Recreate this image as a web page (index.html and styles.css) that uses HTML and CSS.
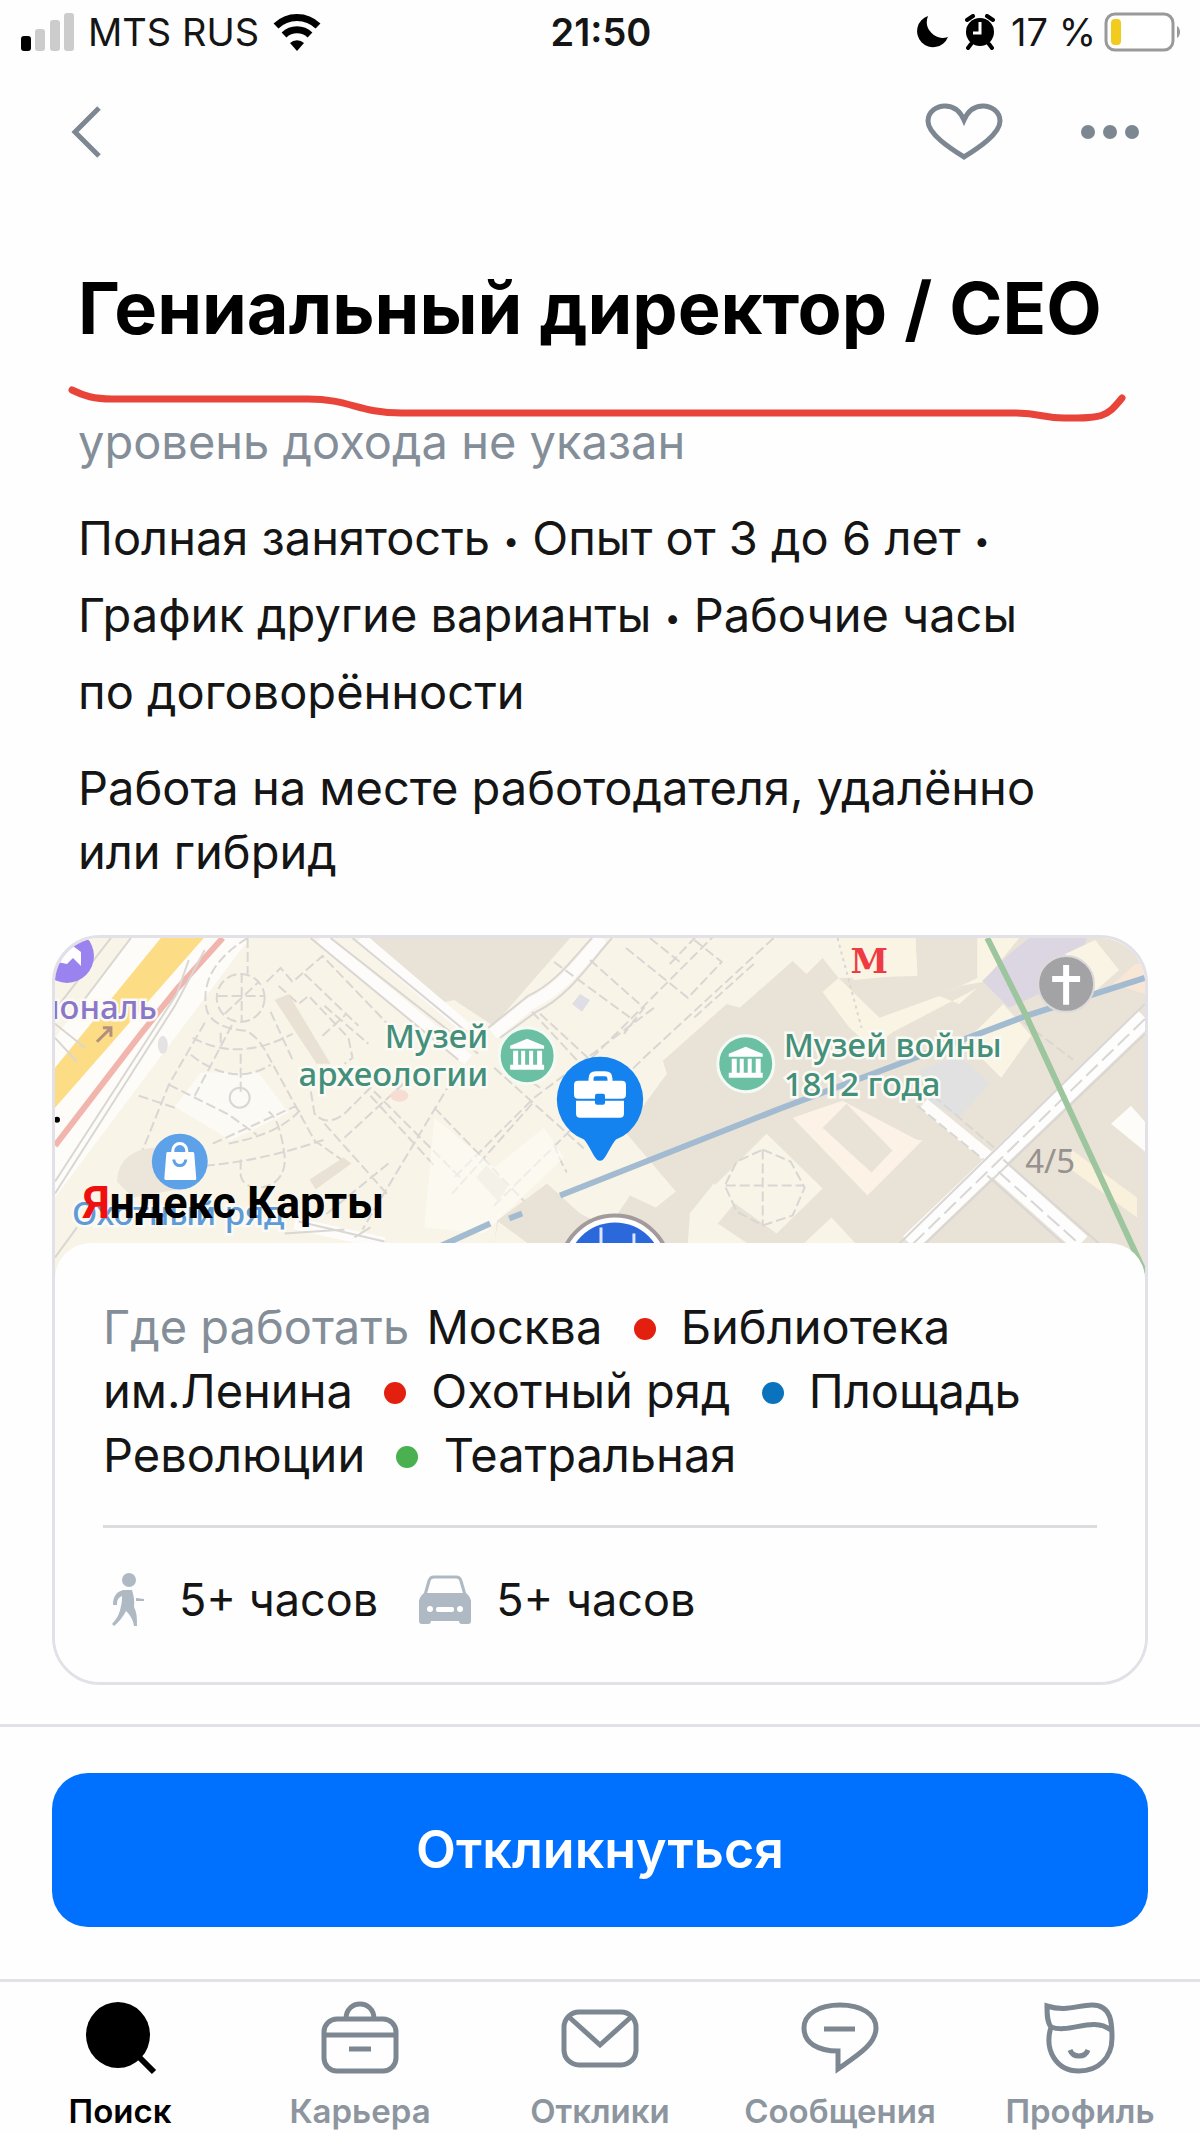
FILE: index.html
```html
<!DOCTYPE html>
<html lang="ru">
<head>
  <meta charset="UTF-8" />
  <meta name="viewport" content="width=device-width, initial-scale=1" />
  <title>Гениальный директор / CEO</title>
  <link rel="stylesheet" href="styles.css">
</head>
<body>
  <div class="status-bar">
    <div class="status-left">
      <svg class="signal" viewBox="0 0 54 40" width="54" height="40">
        <rect x="1" y="24" width="10" height="15" rx="3" fill="#000"/>
        <rect x="15" y="17" width="10" height="22" rx="3" fill="#ccc"/>
        <rect x="30" y="8" width="10" height="31" rx="3" fill="#ccc"/>
        <rect x="44" y="1" width="10" height="38" rx="3" fill="#ccc"/>
      </svg>
      <span>MTS RUS</span>
      <svg viewBox="0 0 48 40" width="48" height="40">
        <path d="M3 14a30 30 0 0 1 42 0" fill="none" stroke="#000" stroke-width="7"/>
        <path d="M11 23a19 19 0 0 1 26 0" fill="none" stroke="#000" stroke-width="7"/>
        <path d="M17 31a10 10 0 0 1 14 0l-7 8z"/>
      </svg>
    </div>
    <div class="clock">21:50</div>
    <div class="status-right">
      <svg class="moon" viewBox="0 0 32 34" width="32" height="34">
        <path d="M11 1A16 16 0 1 0 31 22 16 16 0 0 1 11 1z"/>
      </svg>
      <svg class="alarm" viewBox="0 0 30 36" width="30" height="36">
        <circle cx="15" cy="18" r="14"/>
        <path d="M2 6l6-4M22 2l6 4M6 30l-3 4M24 30l3 4" stroke="#000" stroke-width="4" stroke-linecap="round"/>
        <path d="M15 8v11H8" fill="none" stroke="#fff" stroke-width="3"/>
      </svg>
      <span>17 %</span>
      <svg class="battery" viewBox="0 0 78 40" width="78" height="40">
        <rect x="2" y="2" width="67" height="36" rx="9" fill="#fff" stroke="#999" stroke-width="3"/>
        <rect x="7" y="7" width="10" height="26" rx="4" fill="#f3cb1c"/>
        <path d="M73 14c4 2 4 10 0 12z" fill="#999"/>
      </svg>
    </div>
  </div>

  <header class="top-nav">
    <button class="icon-btn" aria-label="Назад">
      <svg viewBox="0 0 34 52" width="34" height="52">
        <path d="M31 2L7 26l24 24" class="line"/>
      </svg>
    </button>
    <div class="top-actions">
      <button class="icon-btn" aria-label="В избранное">
        <svg viewBox="0 0 80 60" width="80" height="60">
          <path d="M40 55C26 46 4 32 4 19 4 10 12 4 21 4c9 0 15 5 19 14C44 9 50 4 59 4c9 0 17 6 17 15 0 13-22 27-36 36z" class="line"/>
        </svg>
      </button>
      <button class="icon-btn" aria-label="Ещё">
        <svg viewBox="0 0 60 16" width="60" height="16" fill="#7d8791">
          <ellipse cx="8" cy="8" rx="7" ry="7"/>
          <ellipse cx="30" cy="8" rx="7" ry="7"/>
          <ellipse cx="52" cy="8" rx="7" ry="7"/>
        </svg>
      </button>
    </div>
  </header>

  <main class="vacancy">
    <div class="intro">
      <h1>Гениальный директор / CEO</h1>
      <svg class="marker" viewBox="0 0 1064 36">
        <path d="M4 6C16 12 26 15 44 15H240C282 15 290 29 334 29H944C972 29 975 34 996 34 1034 34 1038 34 1054 14" fill="none" stroke="#e8443a" stroke-width="7" stroke-linecap="round" stroke-linejoin="round"/>
      </svg>
      <p class="salary">уровень дохода не указан</p>
      <p class="terms">Полная занятость <span class="sep">•</span> Опыт от 3 до 6 лет <span class="sep">•</span><br>График другие варианты <span class="sep">•</span> Рабочие часы<br>по договорённости</p>
      <p class="place">Работа на месте работодателя, удалённо<br>или гибрид</p>
    </div>

    <section class="card">
      <svg class="map" viewBox="0 0 1092 342">
        <rect width="1092" height="342" fill="#f9f4e8"/>

        <!-- дороги слева -->
        <path d="M0 100L75 0H195L0 260z" fill="#fdfcf8"/>
        <path d="M106 0H149L0 170V130z" fill="#fcdc85"/>
        <path d="M168 0L123 50 86 96 0 208" class="road-red"/>
        <path d="M56 0L0 72M76 0L14 82M0 100l22 24M0 86l30 24M134 22l-12 34L0 244M150 12L120 68 0 256M0 320L22 290" class="thin"/>

        <!-- сквер -->
        <path d="M146 135l58 0 30 40-58 28-56-34z" fill="#fbfaf5"/>
        <circle cx="186" cy="60" r="24" class="dash"/>
        <path d="M163 58h46M187 35v50M193 0v36M170 76l34-32" class="dash"/>
        <path d="M193 0C160 20 146 45 152 72c4 14 22 20 40 21 10 6 16 14 22 26l34 62 12 22 34 24M150 85l-36 62-34 85M136 117c30 24 58 24 80 10M138 100c30 16 62 16 100-4M186 116v40M166 95v14M114 147l60 30 28 20M140 158l40-76M158 206l84-38M174 206c40-8 60-20 74-36M120 170l-36-12M150 228c50-4 90-16 120-26M186 222v14c0 22 48 20 44-18-4-30-10-40-16-44" class="dash"/>
        <circle cx="185" cy="160" r="10" class="thin"/>
        <path d="M224 48l20 18 10-8 40 42 4 20-8 6M212 44l14-14 12 14 30-26 90 94M270 68l44 38M268 98l24-22M250 36l54 52M254 140l6 36c10 12 24 6 32-2l24-24 90 90M270 186l64 72M290 200l70-64M316 158l64 70M404 132l-96 160M334 226l-64 52M216 74l22 48" class="dash"/>
        <path d="M220 62l14-6 42 70h-14z" fill="#e9e2d4"/>
        <path d="M255 242l34-22 8 6-36 26z" fill="#e9e2d4"/>
        <path d="M62 244q2-34 44-34l28 40-56 10z" fill="#ece5d9"/>
        <ellipse cx="108" cy="107" rx="5" ry="9" fill="#e4e2e2"/>
        <ellipse cx="345" cy="158" rx="9" ry="6" fill="#f6dcd2"/>

        <!-- кварталы в центре -->
        <path d="M306 0H516L439 88 400 62 380 66z" fill="#e9e2d6"/>
        <path d="M266 0L414 122M306 0L428 104M439 96L476 66C510 50 530 20 548 0" class="road-w"/>
        <path d="M256 0L404 122M276 0L424 116M298 0L422 102M434 90L474 58C504 44 522 16 538 0M446 100L482 74C516 58 538 22 558 0" class="thin"/>
        <path d="M536 22l54 48-20 26M500 24l82 60M572 10l62 50 34-36-30-24M596 0l30 24M616 26l42-44M486 76l50 46 150-150M478 74l76 82M600 70L480 160 400 240M720 0L590 120 440 268M700 26L640 80M486 150l-24-16M540 180l80 80M500 206c10 30 24 50 52 72M478 166l-80 90M380 170l100 104M440 130l100 90" class="dash"/>
        <path d="M518 66l8-10 10 6-8 12z" fill="#dfdde6"/>
        <path d="M422 240l10-12 22 20-10 16z" fill="#e9e2d6"/>
        <path d="M380 180l60 50 50-40 20 30-80 76-60-6z" fill="#fcfbf5" opacity=".6"/>
        <path d="M240 286L330 306" class="road-w"/>
        <path d="M244 284L330 304M230 296l60-4M300 300l16-10" class="thin"/>

        <!-- застройка справа -->
        <path d="M739 23L753 36 769 20 785 40 864 38 862 0H1092V342H436L443 283 493 246 526 276 550 288 569 252 609 256 576 216 569 196 613 136 609 123 673 66 686 70z" fill="#e9e2d6"/>
        <path d="M540 196l26-8 56 66-20 16-26-12-24 36-50-44zM440 306l4-22 30 22z" fill="#f9f4e8"/>
        <path d="M769 54L785 40 826 80 886 58 906 66 924 50 840 94 818 110 796 90z" fill="#faf4e4"/>
        <path d="M785 0H862L864 36 800 42z" fill="#faf4e4"/>
        <path d="M924 0H966L930 44 906 48 890 56 924 40z" fill="#faf4e4"/>
        <path d="M739 180L789 163 863 202 869 203 814 258z" fill="#fcf3e6"/>
        <path d="M793 166L839 213 818 235 769 190z" fill="#e9e2d6"/>
        <path d="M713 196L769 251 723 296 659 250z" fill="#f9f4e8"/>
        <path d="M636 276l24-30 24 16-20 24 30 20h-60zM750 306l28-26 24 26z" fill="#f9f4e8"/>
        <path d="M709 212l28 12 14 26-12 28-30 10-26-14-12-26 12-24zM709 212v76M672 248h78" class="dash"/>
        <path d="M866 132l40-14 30 28-30 34-30-16z" fill="#e2e1e2"/>
        <path d="M912 104l38-38 28 32-30 42z" fill="#faf4e4"/>
        <path d="M929 43L956 16 976 0H1034L1020 40 956 70z" fill="#dcd6e2"/>
        <path d="M1012 16l30-14 24 30-34 30z" fill="#faf4e4"/>
        <path d="M1060 46l22-20h10v30z" fill="#f8e6d6"/>
        <path d="M1058 186l20-18 14 16v30z" fill="#fdfcf8"/>
        <path d="M1018 212l66 48v20l-66-48z" fill="#faf1dd"/>
        <path d="M784 0L808 90" class="dots"/>
        <path d="M870 166l76 62" class="road-w"/>
        <path d="M970 84l50 38M864 168l76 62M880 158l68 58" class="dash"/>
        <path d="M1092 80L856 306M943 230L1028 306" class="road-big"/>
        <path d="M1092 66L846 306M1092 96L872 306M950 222L1046 306M934 238L1010 306" class="thin"/>
        <path d="M1092 81L860 306M945 234L1030 310" class="lane"/>

        <!-- метро -->
        <path d="M383 310L436 286M455 281L468 276M506 258L726 171 846 126 973 78 1092 40" class="metro-blue"/>
        <path d="M934 0L973 78 1092 336" class="metro-green"/>

        <!-- подписи -->
        <circle cx="12" cy="18" r="27" fill="#9a83ee"/>
        <path d="M2 24l16-16 8 6 0 14-8-8-6 6z" fill="#fff"/>
        <text x="102" y="81" text-anchor="end" class="label purple">иональ</text>
        <path d="M42 104l14-14m-8 0h8v9" fill="none" stroke="#b58f7e" stroke-width="3"/>
        <circle cx="2" cy="182" r="3"/>
        <text x="434" y="110" text-anchor="end" class="label green">Музей</text>
        <text x="434" y="148" text-anchor="end" class="label green">археологии</text>
        <text x="730" y="119" class="label green">Музей войны</text>
        <text x="730" y="158" class="label green">1812 года</text>
        <text x="972" y="235" class="label grey">4/5</text>
        <text x="797" y="35" class="metro">М</text>
        <text x="17" y="288" class="label blue">Охотный ряд</text>

        <g id="museum">
          <circle cx="473" cy="118" r="28" fill="#6bbfa3" stroke="#f4faf4" stroke-width="3"/>
          <path d="M456 108l17-7 17 7v3h-34zM459 113h5v14h-5zM467 113h4v14h-4zM475 113h4v14h-4zM483 113h5v14h-5zM456 127h34v5h-34z" fill="#fff"/>
        </g>
        <use href="#museum" x="219" y="8"/>

        <circle cx="1013" cy="46" r="28" fill="#a3a2a5" stroke="#dcdad8" stroke-width="2"/>
        <path d="M1013 27v40M999 41h28" stroke="#fff" stroke-width="6"/>

        <circle cx="125" cy="224" r="28" fill="#5da1e8"/>
        <path d="M113 216h25l2 25h-29z" fill="#fff" stroke="#fff" stroke-width="3" stroke-linejoin="round"/>
        <path d="M118 216v-3a7 7 0 0 1 14 0v3" fill="none" stroke="#fff" stroke-width="3"/>
        <path d="M119 222a6 6 0 0 0 12 0" fill="none" stroke="#5da1e8" stroke-width="3"/>
        <text x="28" y="281" class="brand"><tspan fill="#f00f0f">Я</tspan>ндекс Карты</text>

        <circle cx="561" cy="333" r="55" fill="#fff" stroke="#a39a9c" stroke-width="4"/>
        <circle cx="561" cy="333" r="48" fill="#2b68dc"/>
        <path d="M547 290v20M580 296v14" stroke="#dbe8ff" stroke-width="3"/>

        <path d="M546 119a43 43 0 0 1 16 83c-5 6-8 14-12 19-2 3-6 3-8 0-4-5-7-13-12-19a43 43 0 0 1 16-83z" fill="#1483ef"/>
        <path d="M537 144v-3q0-5 5-5h9q5 0 5 5v3" fill="none" stroke="#fff" stroke-width="5"/>
        <path d="M524 143h44q4 0 4 4v10q0 4-4 4H524q-4 0-4-4v-10q0-4 4-4zM522 163h48v13q0 4-4 4H526q-4 0-4-4z" fill="#fff"/>
        <rect x="541" y="156" width="10" height="11" rx="2" fill="#1483ef"/>
      </svg>

      <div class="card-body">
        <p class="stations"><span class="muted">Где работать</span> Москва <i class="dot red"></i> Библиотека<br>им.Ленина <i class="dot red"></i> Охотный ряд <i class="dot blue"></i> Площадь<br>Революции <i class="dot green"></i> Театральная</p>
        <div class="travel">
          <svg class="walk" viewBox="0 0 34 54" width="34" height="54" fill="#aeb9c4">
            <circle cx="18" cy="7" r="7"/>
            <path d="M12 17h9q3 9 2 17c3 6 3 11 3 19h-3c-1-7-4-11-8-15C12 44 7 50 3 53l-2-2c5-5 8-11 9-18 1-4 1-7 1-10-4 2-5 4-5 9H2c0-8 3-13 10-15z"/>
            <path d="M25 25l8 1v2h-8z"/>
          </svg>
          <span>5+ часов</span>
          <svg class="car" viewBox="0 0 54 50" width="54" height="50">
            <path d="M7 20l4-14q1-4 5-4h22q4 0 5 4l4 14" fill="none" stroke="#aeb9c4" stroke-width="3"/>
            <path d="M6 18h42q5 4 5 9v19q0 3-3 3h-6q-3 0-3-3H13q0 3-3 3H4q-3 0-3-3V27q0-5 5-9z" fill="#aeb9c4"/>
            <circle cx="12" cy="34" r="3" fill="#fff"/>
            <circle cx="42" cy="34" r="3" fill="#fff"/>
            <rect x="18" y="32" width="18" height="5" rx="2" fill="#fff"/>
          </svg>
          <span>5+ часов</span>
        </div>
      </div>
    </section>
  </main>

  <div class="action-bar">
    <button class="apply-btn">Откликнуться</button>
  </div>

  <nav class="tab-bar">
    <a href="#" class="tab active">
      <svg viewBox="0 0 80 84" width="80" height="84">
        <ellipse cx="38" cy="39" rx="32" ry="33"/>
        <path d="M58 60l16 16" stroke="#000" stroke-width="6"/>
      </svg>
      <span>Поиск</span>
    </a>
    <a href="#" class="tab">
      <svg viewBox="0 0 80 84" width="80" height="84">
        <rect x="4" y="23" width="72" height="52" rx="13" class="line"/>
        <path d="M26 23c0-20 28-20 28 0M4 39h72M29 53h22" class="line"/>
      </svg>
      <span>Карьера</span>
    </a>
    <a href="#" class="tab">
      <svg viewBox="0 0 80 84" width="80" height="84">
        <rect x="4" y="16" width="72" height="53" rx="15" class="line"/>
        <path d="M9 21l31 28 31-28" class="line"/>
      </svg>
      <span>Отклики</span>
    </a>
    <a href="#" class="tab">
      <svg viewBox="0 0 80 84" width="80" height="84">
        <path d="M38 73V55C18 55 4 47 4 32 4 18 19 9 40 9s36 9 36 23c0 16-18 27-38 41z" class="line"/>
        <path d="M24 33h31" class="line"/>
      </svg>
      <span>Сообщения</span>
    </a>
    <a href="#" class="tab">
      <svg viewBox="0 0 80 84" width="80" height="84">
        <path d="M7 10C26 16 38 9 52 9 72 9 72 28 72 42 72 62 58 75 39 75 16 75 4 54 11 31 7 26 7 18 7 10z" class="line"/>
        <path d="M11 31C30 38 52 20 71 34" class="line"/>
        <path d="M30 54c3 8 15 8 18 0" class="line"/>
      </svg>
      <span>Профиль</span>
    </a>
  </nav>
</body>
</html>
```
FILE: styles.css
```css
* {
  box-sizing: border-box;
}

body {
  margin: 0;
  min-height: 100vh;
  display: flex;
  flex-direction: column;
  background: #fefefe;
  color: #151515;
  font-family: Inter, "Liberation Sans", sans-serif;
  font-size: 47px;
  line-height: 64px;
}

h1, p {
  margin: 0;
}

.line {
  fill: none;
  stroke: #7d8791;
  stroke-width: 5;
}

.status-bar {
  display: grid;
  grid-template-columns: 1fr auto 1fr;
  align-items: center;
  height: 62px;
  padding: 0 18px 0 20px;
  font-size: 38px;
}

.status-left,
.status-right {
  display: flex;
  align-items: center;
  gap: 14px;
}

.status-right {
  justify-content: flex-end;
  gap: 16px;
}

.battery {
  margin-left: -8px;
}

.clock {
  font-weight: 600;
}

.top-nav {
  display: flex;
  justify-content: space-between;
  align-items: center;
  height: 140px;
  padding: 0 60px 0 68px;
}

.top-actions {
  display: flex;
  gap: 76px;
}

.icon-btn {
  display: flex;
  align-items: center;
  padding: 0;
  border: none;
  background: none;
  cursor: pointer;
}

.vacancy {
  flex: 1;
  padding: 64px 52px 36px;
}

.intro {
  padding: 0 16px 51px;
}

h1 {
  padding: 0 10px;
  color: #000;
  font-size: 72px;
  line-height: 84px;
  font-weight: 700;
}

.intro p {
  padding: 0 10px;
}

.marker {
  display: block;
  width: 100%;
  margin: 34px 0 -10px;
  overflow: visible;
}

.salary,
.muted {
  color: #848e98;
}

.terms {
  margin: 25px 0 26px;
  line-height: 77px;
}

.sep {
  font-size: 28px;
  line-height: 28px;
  vertical-align: 4px;
}

.card {
  overflow: hidden;
  border: 3px solid #e2e1e8;
  border-radius: 48px;
}

.map {
  display: block;
  width: 100%;
}

.thin,
.dash,
.dots,
.lane {
  fill: none;
  stroke: #d9d6d3;
  stroke-width: 2;
}

.dash {
  stroke-dasharray: 10 4;
}

.dots {
  stroke-dasharray: 3 4;
}

.lane {
  stroke-dasharray: 16 6;
}

.road-w {
  fill: none;
  stroke: #fdfcfa;
  stroke-width: 12;
}

.road-big {
  fill: none;
  stroke: #fdfdfd;
  stroke-width: 19;
}

.road-red {
  fill: none;
  stroke: #f2b5ae;
  stroke-width: 6;
}

.metro-blue {
  fill: none;
  stroke: #a2bbd0;
  stroke-width: 6;
}

.metro-green {
  fill: none;
  stroke: #9dc59e;
  stroke-width: 6;
}

.label {
  font-family: "Noto Sans", sans-serif;
  font-size: 33px;
  font-weight: 500;
  stroke: #fbfaf4;
  stroke-width: 5;
  paint-order: stroke;
}

.label.purple { fill: #8a77c9; }
.label.green { fill: #438f7a; }
.label.grey { fill: #96928f; stroke: none; font-weight: 400; }
.label.blue { fill: #5f9bd6; }

.metro {
  font-family: "DejaVu Serif", serif;
  font-size: 34px;
  font-weight: 700;
  fill: #ee3b43;
}

.brand {
  font-family: Roboto, "Open Sans", sans-serif;
  font-size: 45px;
  font-weight: 700;
}

.card-body {
  position: relative;
  margin-top: -36px;
  padding: 52px 48px 50px;
  border-radius: 36px 36px 0 0;
  background: #fefefe;
}

.dot {
  display: inline-block;
  width: 22px;
  height: 22px;
  margin: 0 12px 6px 18px;
  border-radius: 50%;
  vertical-align: middle;
}

.muted {
  margin-right: 4px;
}

.dot.red { background: #e3200f; }
.dot.blue { background: #0b72bd; }
.dot.green { background: #4bb050; }

.travel {
  display: flex;
  align-items: center;
  margin-top: 38px;
  padding-top: 40px;
  border-top: 3px solid #dcdce0;
  font-size: 45px;
}

.walk {
  margin: 0 34px 0 8px;
}

.car {
  margin: 0 24px 0 40px;
}

.action-bar {
  padding: 46px 52px 52px;
  border-top: 3px solid #e2e1e8;
}

.apply-btn {
  display: block;
  width: 100%;
  padding: 44px 0;
  border: none;
  border-radius: 36px;
  background: #0070ff;
  color: #fff;
  font-family: inherit;
  font-size: 52px;
  font-weight: 600;
  line-height: 66px;
  cursor: pointer;
}

.tab-bar {
  display: grid;
  grid-template-columns: repeat(5, 1fr);
  border-top: 3px solid #e2e1e8;
  padding-top: 14px;
}

.tab {
  display: flex;
  flex-direction: column;
  align-items: center;
  gap: 8px;
  color: #8d969f;
  font-size: 33px;
  font-weight: 600;
  line-height: 46px;
  text-decoration: none;
}

.tab.active {
  color: #000;
}
```
